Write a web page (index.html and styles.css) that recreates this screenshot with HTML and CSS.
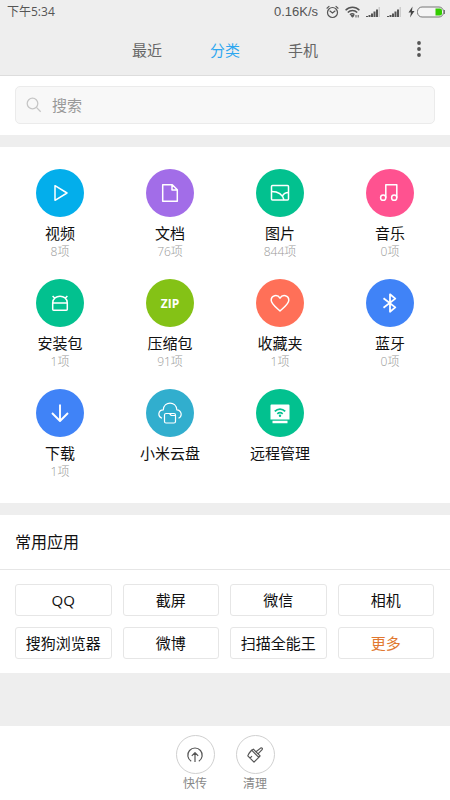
FILE: index.html
```html
<!DOCTYPE html>
<html lang="zh-CN">
<head>
<meta charset="utf-8">
<meta name="viewport" content="width=device-width, initial-scale=1">
<title>文件管理</title>
<link rel="stylesheet" href="styles.css">
</head>
<body>
<header class="top">
  <div class="status">
    <span class="time">下午5:34</span>
    <span class="speed">0.16K/s</span>
    <svg class="status-icon" width="13" height="14" viewBox="0 0 13 14" fill="none" stroke="#555" stroke-width="1.2" stroke-linecap="round"><circle cx="6.5" cy="7.5" r="5"/><path d="M1 3.2 3 1.4M12 3.2 10 1.4M4 6l2.5 2L9 6"/></svg>
    <svg class="status-icon" width="15" height="12" viewBox="0 0 15 12" fill="none" stroke="#555" stroke-width="1.5"><path d="M.6 4.3C4.5.3 10.5.3 14.4 4.3M2.8 6.6c2.7-2.8 6.7-2.8 9.4 0M5 8.8c1.4-1.4 3-1.4 4.4-.2"/><path d="M6 9.500h3L7.500 11.300z" stroke-width="1" fill="#555"/><path d="M11 9v2.500M13.200 9v2.500" stroke-width="1"/></svg>
    <svg class="status-icon" width="15" height="10" viewBox="0 0 15 10" fill="#555"><path d="M0 9h2v1H0zM2.500 8h2v2h-2zM5 6.500h2V10H5zM7.500 4.500h2V10h-2zM10 2.500h2V10h-2z"/><path d="M12.500 0h1.500v10h-1.500z" fill="#ccc"/></svg>
    <svg class="status-icon" width="15" height="10" viewBox="0 0 15 10" fill="#555"><path d="M0 9h2v1H0zM2.500 8h2v2h-2zM5 6.500h2V10H5zM7.500 4.500h2V10h-2zM10 2.500h2V10h-2z"/><path d="M12.500 0h1.500v10h-1.500z" fill="#ccc"/></svg>
    <svg class="battery" width="37" height="12" viewBox="0 0 37 12"><path d="M4.500.5.500 6.500h2.500L2 11.500l4.500-6.500H4z" fill="#444"/><rect x="9.500" y="1" width="26" height="10" rx="4.500" fill="#f5f5f5" stroke="#777"/><path d="M27.500 2.500h4.500a2 2 0 0 1 2 2v3a2 2 0 0 1-2 2h-4.500z" fill="#3c0"/><path d="M36.500 4v4" stroke="#777"/></svg>
  </div>
  <nav class="tabs">
    <button class="tab">最近</button>
    <button class="tab active">分类</button>
    <button class="tab">手机</button>
    <button class="more" aria-label="更多选项"><svg width="6" height="18" viewBox="0 0 6 18" fill="#555"><circle cx="3" cy="3" r="1.900"/><circle cx="3" cy="9" r="1.900"/><circle cx="3" cy="15" r="1.900"/></svg></button>
  </nav>
</header>
<main>
  <section class="search">
    <label class="search-box">
      <svg width="16" height="16" viewBox="0 0 16 16" fill="none" stroke="#c6c6c6" stroke-width="1.300"><circle cx="6.500" cy="6.500" r="5.300"/><path d="m10.400 10.400 4.300 4.300"/></svg>
      <input type="search" placeholder="搜索" aria-label="搜索">
    </label>
  </section>
  <section class="categories">
    <a class="category" href="#"><span class="disc video"><svg width="24" height="24" viewBox="0 0 24 24"><path d="M7 4.700v14.600L19 12z"/></svg></span><span class="name">视频</span><span class="count">8项</span></a>
    <a class="category" href="#"><span class="disc doc"><svg width="24" height="24" viewBox="0 0 24 24"><path d="M4.700 3.700h9.600l5 5v11.600H4.700zM14 3.700V9h5.300"/></svg></span><span class="name">文档</span><span class="count">76项</span></a>
    <a class="category" href="#"><span class="disc green"><svg width="24" height="24" viewBox="0 0 24 24"><rect x="3.500" y="4.500" width="17" height="14.500" rx="1"/><path d="M3.500 10.500c6 0 11 2.500 12.500 8.500M14.500 15c1-2.300 3-3.500 6-3.500"/></svg></span><span class="name">图片</span><span class="count">844项</span></a>
    <a class="category" href="#"><span class="disc music"><svg width="24" height="24" viewBox="0 0 24 24"><circle cx="5.200" cy="16.700" r="2.600"/><circle cx="16.200" cy="16.700" r="2.600"/><path d="M7.800 16.700V3.700h11v13"/></svg></span><span class="name">音乐</span><span class="count">0项</span></a>
    <a class="category" href="#"><span class="disc green"><svg width="24" height="24" viewBox="0 0 24 24"><path d="M4.700 12h14.600v6.300a1 1 0 0 1-1 1H5.700a1 1 0 0 1-1-1zM4.700 12c0-9 14.600-9 14.600 0M6.800 7.300 4.600 4.900M17.200 7.300l2.200-2.400"/></svg></span><span class="name">安装包</span><span class="count">1项</span></a>
    <a class="category" href="#"><span class="disc zip">ZIP</span><span class="name">压缩包</span><span class="count">91项</span></a>
    <a class="category" href="#"><span class="disc heart"><svg width="24" height="24" viewBox="0 0 24 24"><path d="M12 20C8.500 16.800 3.200 13 3.200 9.300 3.200 4.200 9.500 3 12 7.200 14.500 3 20.800 4.200 20.800 9.300 20.800 13 15.500 16.800 12 20z"/></svg></span><span class="name">收藏夹</span><span class="count">1项</span></a>
    <a class="category" href="#"><span class="disc blue"><svg width="24" height="24" viewBox="0 0 24 24"><path d="M5.500 7.200 17.300 16.400 12 20.700V3.300l5.300 4.300L5.500 16.800" stroke-width="1.800"/></svg></span><span class="name">蓝牙</span><span class="count">0项</span></a>
    <a class="category" href="#"><span class="disc blue"><svg width="24" height="24" viewBox="0 0 24 24"><path d="M12 3.500v16M4 12l8 8 8-8" stroke-width="1.900"/></svg></span><span class="name">下载</span><span class="count">1项</span></a>
    <a class="category" href="#"><span class="disc cloud"><svg width="24" height="24" viewBox="0 0 24 24" class="thin"><path d="M4 17.300C-.8 15.500.2 8.900 5.300 8.800 5.900-.2 18.200-.2 18.800 8.800c4.800.3 6 6.500 1.700 8.500"/><path d="M8 12.500h3.500l1.800 2h4.200v6a1.500 1.500 0 0 1-1.500 1.500H8a1.500 1.500 0 0 1-1.500-1.500V14A1.500 1.500 0 0 1 8 12.500zM11.500 12.500H16a1.500 1.500 0 0 1 1.500 1.500v.5"/></svg></span><span class="name">小米云盘</span></a>
    <a class="category" href="#"><span class="disc green"><svg width="24" height="24" viewBox="0 0 24 24"><path d="M3.500 3.500h17a1 1 0 0 1 1 1v14h-19v-14a1 1 0 0 1 1-1zM4.500 19.700h15v2.500h-15z" fill="#fff" stroke="none"/><path d="M6.800 10.300c3-3 7.400-3 10.400 0M9.300 12.800c1.700-1.500 3.700-1.500 5.400 0" stroke="#02c18f" stroke-width="1.800"/><circle cx="12" cy="14.700" r="1.200" fill="#02c18f" stroke="none"/></svg></span><span class="name">远程管理</span></a>
  </section>
  <section class="apps">
    <h2>常用应用</h2>
    <div class="app-grid">
      <button>QQ</button>
      <button>截屏</button>
      <button>微信</button>
      <button>相机</button>
      <button>搜狗浏览器</button>
      <button>微博</button>
      <button>扫描全能王</button>
      <button class="accent">更多</button>
    </div>
  </section>
</main>
<footer class="actions">
  <button class="action"><span class="ring"><svg width="18" height="18" viewBox="0 0 18 18"><path d="M5.200 15.300a7.200 7.200 0 1 1 7.600 0M9 16V7M5.800 9.900 9 6.700l3.200 3.200"/></svg></span>快传</button>
  <button class="action"><span class="ring"><svg width="18" height="18" viewBox="0 0 18 18"><path d="M5.600 4.200 12.800 11.400 8 16.200 1.800 9.800C2.500 7.500 4 6 5.600 4.200zM7.400 3.200l6.700 6.700-1.300 1.500L5.600 4.200zM10 5.800l4.600-3.700c1.200-.8 2.300.4 1.500 1.500L12 7.800M4 12.200l2-2"/></svg></span>清理</button>
</footer>
</body>
</html>
```
FILE: styles.css
```css
* {
  box-sizing: border-box;
}

body {
  margin: 0;
  min-height: 100vh;
  display: flex;
  flex-direction: column;
  background: #eee;
  color: #111;
  font-family: "Open Sans", "Noto Sans CJK SC", sans-serif;
  font-size: 15px;
}

button {
  padding: 0;
  border: 0;
  background: none;
  color: inherit;
  font: inherit;
  cursor: pointer;
}

svg {
  display: block;
  flex: none;
}

.top {
  border-bottom: 1px solid #ddd;
}

.status {
  display: flex;
  align-items: center;
  height: 24px;
  padding: 0 5px 0 7px;
  gap: 6px;
  color: #555;
  font-size: 12px;
  line-height: 24px;
}

.speed {
  margin-left: auto;
  padding-right: 2px;
  font-family: "Liberation Sans", sans-serif;
  font-size: 13px;
}

.tabs {
  position: relative;
  display: flex;
  justify-content: center;
  gap: 48px;
  height: 51px;
  color: #666;
}

.tab.active {
  color: #2ea7f0;
}

.more {
  position: absolute;
  top: 0;
  right: 16px;
  height: 50px;
  padding: 0 12px;
}

.search {
  padding: 10px 15px 11px;
  background: #fff;
}

.search-box {
  display: flex;
  align-items: center;
  gap: 10px;
  height: 38px;
  padding: 0 10px;
  border: 1px solid #ebebeb;
  border-radius: 5px;
  background: #f8f8f8;
}

.search-box input {
  flex: 1;
  min-width: 0;
  padding: 0;
  border: 0;
  outline: 0;
  background: none;
  color: #333;
  font: inherit;
}

.search-box input::placeholder {
  color: #999;
}

.categories {
  display: grid;
  grid-template-columns: repeat(4, 1fr);
  grid-auto-rows: 110px;
  margin-top: 12px;
  padding: 22px 5px 4px;
  background: #fff;
}

.category {
  display: flex;
  flex-direction: column;
  align-items: center;
  color: inherit;
  text-decoration: none;
}

.disc {
  display: flex;
  align-items: center;
  justify-content: center;
  width: 48px;
  height: 48px;
  border-radius: 50%;
}

.disc svg {
  fill: none;
  stroke: #fff;
  stroke-width: 1.5;
  stroke-linejoin: round;
}

.disc svg.thin {
  stroke-width: 1.2;
}

.video { background: #03aeeb; }
.doc { background: #a26de8; }
.green { background: #02c18f; }
.music { background: #ff5290; }
.heart { background: #ff7058; }
.blue { background: #4083f7; }
.cloud { background: #31aece; }

.zip {
  background: #84c216;
  color: #fff;
  font-size: 12px;
  font-weight: bold;
}

.name {
  margin-top: 6px;
  line-height: 20px;
}

.count {
  color: #999;
  font-size: 12px;
  font-weight: 300;
  line-height: 18px;
}

.apps {
  margin-top: 12px;
  background: #fff;
}

.apps h2 {
  margin: 0;
  padding: 0 15px;
  border-bottom: 1px solid #e6e6e6;
  font-size: 16px;
  font-weight: normal;
  line-height: 54px;
}

.app-grid {
  display: grid;
  grid-template-columns: repeat(4, 1fr);
  gap: 11px;
  padding: 14px 16px 14px 15px;
}

.app-grid button {
  height: 32px;
  border: 1px solid #e6e6e6;
  border-radius: 3px;
  line-height: 30px;
  white-space: nowrap;
}

.app-grid .accent {
  color: #e17830;
}

.actions {
  display: flex;
  justify-content: center;
  margin-top: auto;
  padding: 9px 0 6px;
  background: #fff;
}

.action {
  display: flex;
  flex-direction: column;
  align-items: center;
  width: 60px;
  color: #888;
  font-size: 12px;
  line-height: 20px;
}

.ring {
  display: flex;
  align-items: center;
  justify-content: center;
  width: 39px;
  height: 39px;
  border: 1px solid #d0d0d0;
  border-radius: 50%;
}

.ring svg {
  fill: none;
  stroke: #555;
  stroke-width: 1.2;
  stroke-linejoin: round;
}
```
